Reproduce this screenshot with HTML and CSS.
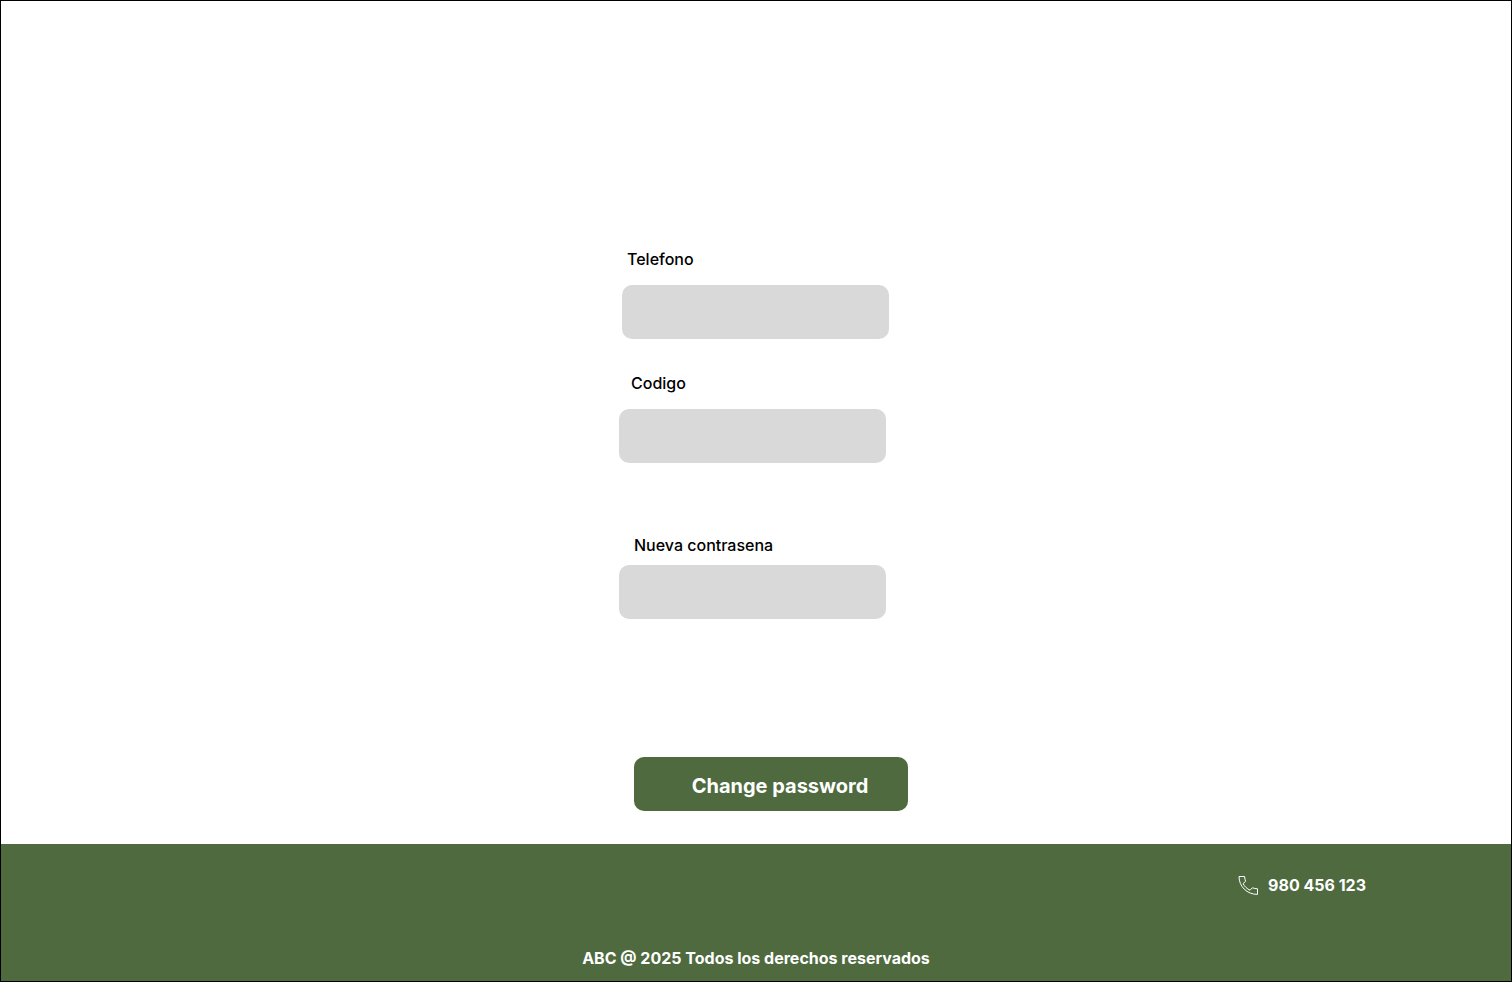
FILE: index.html
```html
<!DOCTYPE html>
<html lang="es">
<head>
<meta charset="utf-8">
<meta name="viewport" content="width=device-width, initial-scale=1">
<title>Change password</title>
<link rel="stylesheet" href="styles.css">
</head>
<body class="page">
  <main class="content">
    <form class="form">
      <div class="field field-phone">
        <label class="label" for="telefono">Telefono</label>
        <input class="input" id="telefono" type="tel">
      </div>
      <div class="field field-code">
        <label class="label" for="codigo">Codigo</label>
        <input class="input" id="codigo" type="text">
      </div>
      <div class="field field-password">
        <label class="label" for="contrasena">Nueva contrasena</label>
        <input class="input" id="contrasena" type="password">
      </div>
      <button class="submit" type="submit">Change password</button>
    </form>
  </main>
  <footer class="footer">
    <a class="phone" href="tel:980456123">
      <svg class="phone-icon" viewBox="0 0 20 20" aria-hidden="true">
        <path d="M1 1.5 H6.6 C6.8 3.6 7.1 5 7.6 6.3 L5 8.6 C6.7 11.6 9 13.8 12 15.2 L14.4 12.8 C16 13.4 17.6 13.6 19.5 13.8 V19.4 C9 19.4 1 11.6 1 1.5 Z"/>
      </svg>
      <span>980 456 123</span>
    </a>
    <p class="rights">ABC @ 2025 Todos los derechos reservados</p>
  </footer>
</body>
</html>
```
FILE: styles.css
```css
* {
  box-sizing: border-box;
}

.page {
  display: flex;
  flex-direction: column;
  min-height: 100vh;
  margin: 0;
  border: 1px solid #000;
  background: #fff;
  color: #000;
  font-family: Inter, "Liberation Sans", sans-serif;
  font-size: 16px;
  line-height: 20px;
}

.content {
  flex: 1;
  display: flex;
  justify-content: center;
  padding: 248px 0 33px;
}

.form {
  width: 274px;
}

.field {
  display: flex;
  flex-direction: column;
  gap: 16px;
  width: 267px;
}

.field-phone {
  margin: 0 0 34px 3px;
}

.field-code {
  margin-bottom: 72px;
}

.field-password {
  gap: 10px;
  margin-bottom: 138px;
}

.label {
  font-weight: 500;
}

.field-phone .label {
  padding-left: 5px;
}

.field-code .label {
  padding-left: 12px;
}

.field-password .label {
  padding-left: 15px;
}

.input {
  width: 100%;
  height: 54px;
  padding: 0 16px;
  border: 0;
  border-radius: 10px;
  background: #d9d9d9;
  font: inherit;
}

.submit {
  display: block;
  width: 100%;
  height: 54px;
  margin-left: 15px;
  padding: 4px 0 0 18px;
  border: 0;
  border-radius: 10px;
  background: #4e6a3e;
  color: #fff;
  font-family: inherit;
  font-size: 20px;
  font-weight: 700;
  line-height: 24px;
}

.footer {
  display: flex;
  flex-direction: column;
  gap: 53px;
  padding: 31px 0 13px;
  background: #4e6a3e;
  color: #fff;
  font-weight: 700;
}

.phone {
  display: flex;
  align-items: center;
  align-self: flex-end;
  gap: 10px;
  margin-right: 145px;
  color: inherit;
  text-decoration: none;
}

.phone-icon {
  width: 20px;
  height: 20px;
  fill: none;
  stroke: #fff;
  stroke-width: 1;
  stroke-linejoin: round;
}

.rights {
  margin: 0;
  text-align: center;
}
```
